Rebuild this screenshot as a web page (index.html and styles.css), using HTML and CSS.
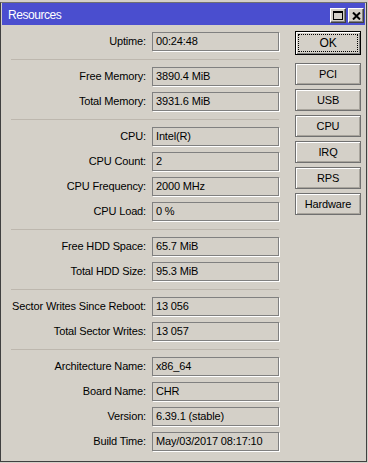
FILE: index.html
```html
<!DOCTYPE html>
<html>
<head>
<meta charset="utf-8">
<link rel="stylesheet" href="styles.css">
</head>
<body>
<div class="frame">
  <div class="titlebar">
    <span class="title">Resources</span>
    <div class="tbtns">
      <span class="tbtn">
        <svg width="10" height="9" viewBox="0 0 10 9"><rect x="0.5" y="0.5" width="9" height="8" fill="none" stroke="#000"/><rect x="0" y="0" width="10" height="2" fill="#000"/></svg>
      </span>
      <span class="tbtn">
        <svg width="9" height="8" viewBox="0 0 9 8"><path d="M1 0.5 L8 7.5 M8 0.5 L1 7.5" stroke="#000" stroke-width="2" fill="none"/></svg>
      </span>
    </div>
  </div>
  <div class="content">
    <div class="fields">
      <div class="row"><span class="lbl">Uptime:</span><span class="val">00:24:48</span></div>
      <div class="sep"></div>
      <div class="row"><span class="lbl">Free Memory:</span><span class="val">3890.4 MiB</span></div>
      <div class="row"><span class="lbl">Total Memory:</span><span class="val">3931.6 MiB</span></div>
      <div class="sep"></div>
      <div class="row"><span class="lbl">CPU:</span><span class="val">Intel(R)</span></div>
      <div class="row"><span class="lbl">CPU Count:</span><span class="val">2</span></div>
      <div class="row"><span class="lbl">CPU Frequency:</span><span class="val">2000 MHz</span></div>
      <div class="row"><span class="lbl">CPU Load:</span><span class="val">0 %</span></div>
      <div class="sep"></div>
      <div class="row"><span class="lbl">Free HDD Space:</span><span class="val">65.7 MiB</span></div>
      <div class="row"><span class="lbl">Total HDD Size:</span><span class="val">95.3 MiB</span></div>
      <div class="sep"></div>
      <div class="row"><span class="lbl">Sector Writes Since Reboot:</span><span class="val">13 056</span></div>
      <div class="row"><span class="lbl">Total Sector Writes:</span><span class="val">13 057</span></div>
      <div class="sep"></div>
      <div class="row"><span class="lbl">Architecture Name:</span><span class="val">x86_64</span></div>
      <div class="row"><span class="lbl">Board Name:</span><span class="val">CHR</span></div>
      <div class="row"><span class="lbl">Version:</span><span class="val">6.39.1 (stable)</span></div>
      <div class="row"><span class="lbl">Build Time:</span><span class="val">May/03/2017 08:17:10</span></div>
    </div>
    <div class="buttons">
      <div class="btn ok"><span class="okin"><span class="focus">OK</span></span></div>
      <div class="btn first">PCI</div>
      <div class="btn">USB</div>
      <div class="btn">CPU</div>
      <div class="btn">IRQ</div>
      <div class="btn">RPS</div>
      <div class="btn">Hardware</div>
    </div>
  </div>
</div>
</body>
</html>
```
FILE: styles.css
```css
html, body {
  margin: 0;
  padding: 0;
  background: #d4d0c8;
}
body {
  width: 368px;
  height: 463px;
  overflow: hidden;
  font-family: "Liberation Sans", Arial, sans-serif;
  font-size: 11px;
  color: #000;
}
.frame {
  margin-top: 2px;
  width: 367px;
  height: 460px;
  box-sizing: border-box;
  border: 1px solid #404040;
  border-top-color: #707070;
  padding: 0 1px 1px 1px;
  background: #d4d0c8;
}
.titlebar {
  height: 22px;
  background: #4a4ecf;
  display: flex;
  justify-content: space-between;
}
.title {
  color: #fff;
  font-size: 12px;
  letter-spacing: -0.45px;
  padding-left: 6px;
  line-height: 24px;
}
.tbtns {
  display: flex;
  gap: 2px;
  align-self: flex-end;
  margin-bottom: 2px;
  margin-right: 1px;
}
.tbtn {
  width: 16px;
  height: 15px;
  box-sizing: border-box;
  background: #d4d0c8;
  border: 1px solid;
  border-color: #fff #404040 #404040 #fff;
  box-shadow: inset -1px -1px 0 #808080;
  display: flex;
  align-items: center;
  justify-content: center;
}
.content {
  display: flex;
  padding: 7px 0 0 9px;
}
.fields {
  display: flex;
  flex-direction: column;
  width: 268px;
}
.row {
  display: flex;
  height: 19px;
  margin-bottom: 6px;
}
.lbl {
  width: 135px;
  margin-right: 6px;
  text-align: right;
  line-height: 19px;
  letter-spacing: -0.15px;
  white-space: nowrap;
}
.val {
  width: 127px;
  height: 19px;
  box-sizing: border-box;
  border: 1px solid #808080;
  box-shadow: 1px 1px 0 #fff;
  padding-left: 3px;
  line-height: 17px;
  letter-spacing: -0.15px;
  white-space: nowrap;
}
.sep {
  height: 1px;
  background: #bdb7ae;
  margin: 2px 0 7px;
}
.buttons {
  display: flex;
  flex-direction: column;
  margin-left: 16px;
  margin-top: -1px;
  width: 66px;
}
.btn {
  height: 22px;
  box-sizing: border-box;
  border: 1px solid #707070;
  box-shadow: inset 1px 1px 0 #fff, inset -1px -1px 0 #a8a49c;
  background: #d4d0c8;
  display: flex;
  align-items: center;
  justify-content: center;
  margin-bottom: 4px;
  letter-spacing: -0.15px;
}
.btn.first {
  margin-top: 4px;
}
.btn.ok {
  height: 24px;
  border: 1px solid #000;
  box-shadow: none;
  padding: 0;
  align-items: stretch;
  justify-content: stretch;
}
.okin {
  flex: 1;
  display: flex;
  padding: 2px;
  box-shadow: inset 1px 1px 0 #fff, inset -1px -1px 0 #808080;
}
.focus {
  flex: 1;
  border: 1px dotted #000;
  display: flex;
  align-items: center;
  justify-content: center;
  font-size: 12px;
}
```
